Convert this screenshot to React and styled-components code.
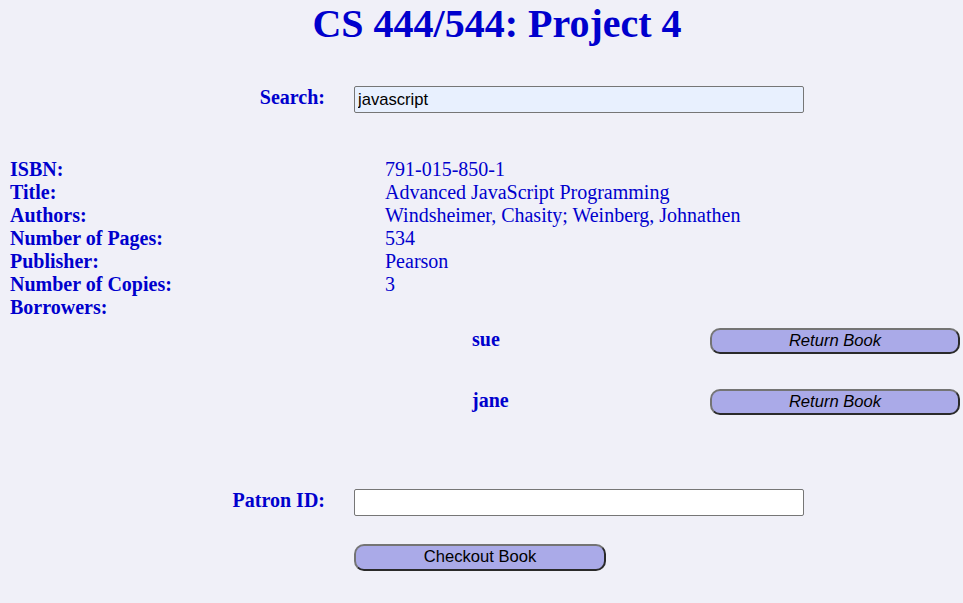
import React from 'react';
import styled, { createGlobalStyle } from 'styled-components';

const GlobalStyle = createGlobalStyle`
  html, body {
    margin: 0;
    background: #f0f0f8;
  }
  body {
    font-family: "Liberation Serif", "Times New Roman", serif;
    font-size: 20px;
    color: #0000cd;
  }
`

const Page = styled.div`
  padding: 0 8px 20px;
`

const Title = styled.h1`
  margin: 0;
  padding: 2px 0 0 31px;
  font-size: 40px;
  font-weight: 700;
  text-align: center;
  line-height: 44px;
`

const FormRow = styled.div`
  display: grid;
  grid-template-columns: 317px 450px;
  column-gap: 29px;
  align-items: center;
  margin-top: ${props => props.top}px;
`

const Label = styled.label`
  padding-bottom: 4px;
  font-weight: 700;
  text-align: ${props => props.right ? 'right' : 'left'};
`

const Input = styled.input`
  box-sizing: border-box;
  width: 450px;
  height: 27px;
  padding: 3px;
  border: 1px solid #767676;
  border-radius: 2px;
  background: ${props => props.filled ? '#e8f0fe' : '#fff'};
  font-family: "Liberation Sans", Arial, sans-serif;
  font-size: 16.6px;
  color: #000;
`

const Details = styled.dl`
  display: grid;
  grid-template-columns: 375px 1fr;
  margin: 45px 0 0;
  padding-left: 2px;
  line-height: 23px;
`

const Term = styled.dt`
  font-weight: 700;
`

const Value = styled.dd`
  margin: 0;
`

const Borrowers = styled.div`
  display: grid;
  grid-template-columns: 464px 238px 250px;
  row-gap: 35px;
  align-items: center;
  margin-top: 9px;
`

const Name = styled.span`
  grid-column: 2;
  padding-bottom: 3px;
  font-weight: 700;
`

const Button = styled.button`
  box-sizing: border-box;
  width: ${props => props.wide}px;
  height: ${props => props.tall}px;
  padding: 0 0 1px;
  border: 2px solid;
  border-color: #747474 #2a2a2a #2a2a2a #747474;
  border-radius: 10px;
  background: #aaaae8;
  color: #000;
  font-family: "Liberation Sans", Arial, sans-serif;
  font-size: 16.6px;
  font-style: ${props => props.italic ? 'italic' : 'normal'};
  text-align: center;
`

const Actions = styled.div`
  margin: 28px 0 0 346px;
`

const book = [
  ['ISBN:', '791-015-850-1'],
  ['Title:', 'Advanced JavaScript Programming'],
  ['Authors:', 'Windsheimer, Chasity; Weinberg, Johnathen'],
  ['Number of Pages:', '534'],
  ['Publisher:', 'Pearson'],
  ['Number of Copies:', '3'],
  ['Borrowers:', ''],
]

const borrowers = ['sue', 'jane']

export default function App() {
  return (
    <Page>
      <GlobalStyle/>
      <Title>CS 444/544: Project 4</Title>
      <FormRow top={40}>
        <Label right>Search:</Label>
        <Input filled defaultValue="javascript"/>
      </FormRow>
      <Details>
        {book.map(([term, value]) => <React.Fragment key={term}>
          <Term>{term}</Term>
          <Value>{value}</Value>
        </React.Fragment>)}
      </Details>
      <Borrowers>
        {borrowers.map(name => <React.Fragment key={name}>
          <Name>{name}</Name>
          <Button italic wide={250} tall={26}>Return Book</Button>
        </React.Fragment>)}
      </Borrowers>
      <FormRow top={74}>
        <Label right>Patron ID:</Label>
        <Input/>
      </FormRow>
      <Actions>
        <Button wide={252} tall={27}>Checkout Book</Button>
      </Actions>
    </Page>
  )
}
